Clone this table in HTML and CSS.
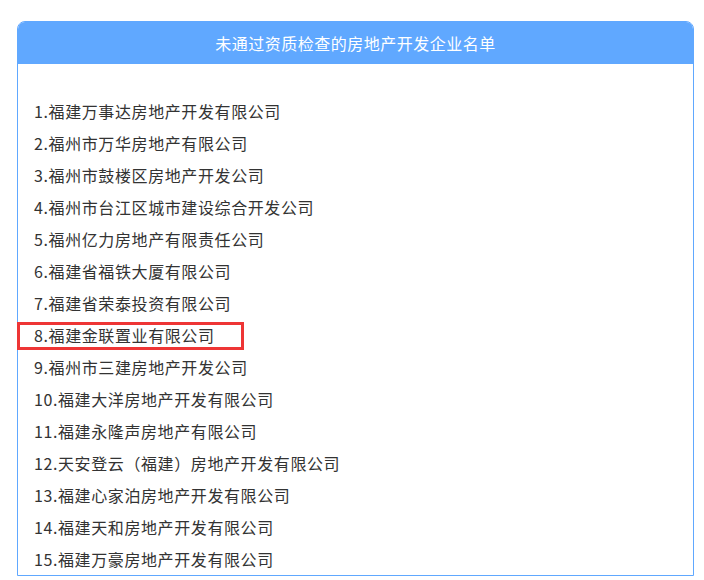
FILE: index.html
```html
<!DOCTYPE html>
<html lang="zh-CN">
<head>
    <meta charset="UTF-8">
    <meta name="viewport" content="width=device-width, initial-scale=1.0">
    <title>未通过资质检查的房地产开发企业名单</title>
    <link rel="stylesheet" href="styles.css">
</head>
<body>

    <div class="list-card">
        <div class="list-title">未通过资质检查的房地产开发企业名单</div>

        <ul class="company-list">
            <li>1.福建万事达房地产开发有限公司</li>
            <li>2.福州市万华房地产有限公司</li>
            <li>3.福州市鼓楼区房地产开发公司</li>
            <li>4.福州市台江区城市建设综合开发公司</li>
            <li>5.福州亿力房地产有限责任公司</li>
            <li>6.福建省福铁大厦有限公司</li>
            <li>7.福建省荣泰投资有限公司</li>
            <li class="marked">8.福建金联置业有限公司</li>
            <li>9.福州市三建房地产开发公司</li>
            <li>10.福建大洋房地产开发有限公司</li>
            <li>11.福建永隆声房地产有限公司</li>
            <li>12.天安登云（福建）房地产开发有限公司</li>
            <li>13.福建心家泊房地产开发有限公司</li>
            <li>14.福建天和房地产开发有限公司</li>
            <li>15.福建万豪房地产开发有限公司</li>
        </ul>
    </div>

</body>
</html>
```

FILE: styles.css
```css
body {
    font-family: "Noto Sans CJK SC", "Noto Sans", sans-serif;
    background-color: #fff;
    margin: 0;
    padding: 0;
}

.list-card {
    position: relative;
    margin: 21px 0 0 17px;
    width: 677px;
    box-sizing: border-box;
    border: 1px solid #60a8ff;
    border-radius: 8px 8px 0 0;
    background-color: #fff;
}

.list-title {
    height: 42px;
    line-height: 42px;
    background-color: #60a8ff;
    border-radius: 7px 7px 0 0;
    color: #fff;
    font-size: 16px;
    letter-spacing: 0.5px;
    text-align: center;
}

.company-list {
    list-style: none;
    margin: 0;
    padding: 31px 0 0 16px;
}

.company-list li {
    height: 32px;
    line-height: 32px;
    font-size: 16px;
    letter-spacing: 0.6px;
    color: #333;
}

.company-list li.marked {
    position: relative;
}

/* red annotation frame around item 8 */
.company-list li.marked::after {
    content: "";
    position: absolute;
    left: -17px;
    top: 3px;
    width: 227px;
    height: 28px;
    box-sizing: border-box;
    border: 3px solid #ee3535;
}
```
